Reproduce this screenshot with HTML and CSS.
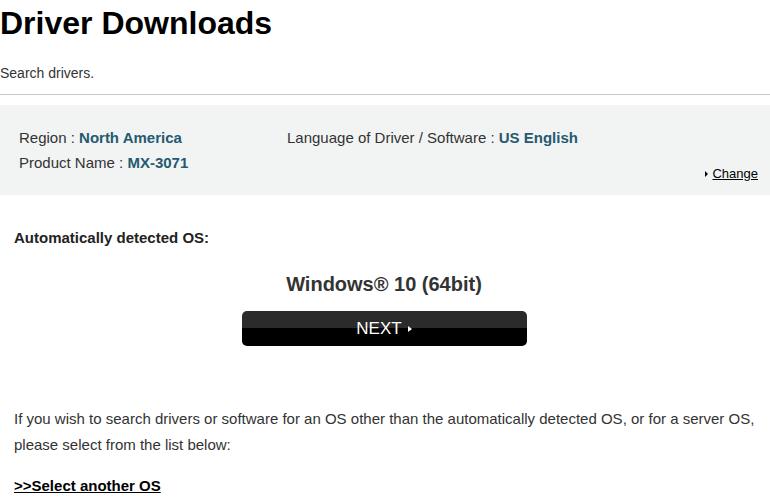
FILE: index.html
```html
<!DOCTYPE html>
<html lang="en">
<head>
    <meta charset="UTF-8">
    <title>Driver Downloads</title>
    <link rel="stylesheet" href="styles.css">
</head>
<body>
    <header class="page-head">
        <h1>Driver Downloads</h1>
        <p class="lead">Search drivers.</p>
    </header>

    <!-- Selected product info -->
    <section class="info-box">
        <div class="info-grid">
            <div class="info-col">
                <div>Region : <strong>North America</strong></div>
                <div>Product Name : <strong>MX-3071</strong></div>
            </div>
            <div class="info-col">
                <div>Language of Driver / Software : <strong>US English</strong></div>
            </div>
        </div>
        <div class="change-row">
            <a href="#" class="change-link">Change</a>
        </div>
    </section>

    <section class="detect">
        <h3>Automatically detected OS:</h3>
        <div class="os-name">Windows&reg; 10 (64bit)</div>
        <div class="btn-row">
            <button class="next-btn">NEXT <span class="arrow"></span></button>
        </div>
    </section>

    <section class="other-os">
        <p>If you wish to search drivers or software for an OS other than the automatically detected OS, or for a server OS, please select from the list below:</p>
        <a href="#" class="select-link">&gt;&gt;Select another OS</a>
    </section>
</body>
</html>
```

FILE: styles.css
```css
body {
    margin: 0;
    font-family: "Liberation Sans", Arial, sans-serif;
    color: #333;
    background: #fff;
}

.page-head {
    border-bottom: 1px solid #c8c8c8;
    padding-bottom: 12px;
}

h1 {
    margin: 0;
    padding-top: 3px;
    font-size: 32px;
    line-height: 40px;
    color: #000;
}

.lead {
    margin: 21px 0 0;
    font-size: 14px;
    line-height: 18px;
    color: #333;
}

.info-box {
    margin-top: 10px;
    background-color: #f2f4f4;
    padding: 24px 12px 14px 19px;
    font-size: 15px;
    color: #333;
}

.info-grid {
    display: flex;
}

.info-col {
    display: flex;
    flex-direction: column;
    gap: 7px;
    line-height: 18px;
}

.info-col:first-child {
    width: 268px;
}

.info-col strong {
    color: #255a70;
}

.change-row {
    display: flex;
    justify-content: flex-end;
    margin-top: -6px;
}

.change-link {
    font-size: 13px;
    color: #000;
    display: flex;
    align-items: center;
    gap: 4px;
}

.change-link::before {
    content: "";
    border-left: 3px solid #000;
    border-top: 3px solid transparent;
    border-bottom: 3px solid transparent;
}

.detect {
    padding: 0 16px 0 14px;
}

.detect h3 {
    margin: 34px 0 0;
    font-size: 15px;
    line-height: 18px;
    color: #222;
}

.os-name {
    text-align: center;
    font-weight: bold;
    font-size: 20px;
    margin-top: 25px;
    line-height: 24px;
}

.btn-row {
    display: flex;
    justify-content: center;
    margin-top: 15px;
}

.next-btn {
    width: 285px;
    height: 35px;
    border: none;
    border-radius: 5px;
    background: linear-gradient(#2b2b2b 50%, #000 50%);
    color: #fff;
    font-family: "Liberation Sans", Arial, sans-serif;
    font-size: 17px;
    display: flex;
    align-items: center;
    justify-content: center;
    gap: 6px;
    cursor: pointer;
}

.arrow {
    border-left: 4px solid #fff;
    border-top: 3px solid transparent;
    border-bottom: 3px solid transparent;
}

.other-os {
    padding: 0 14px;
    margin-top: 60px;
}

.other-os p {
    margin: 0;
    font-size: 15px;
    line-height: 26px;
    color: #333;
}

.select-link {
    display: inline-block;
    margin-top: 19px;
    font-size: 15px;
    font-weight: bold;
    color: #000;
}
```
